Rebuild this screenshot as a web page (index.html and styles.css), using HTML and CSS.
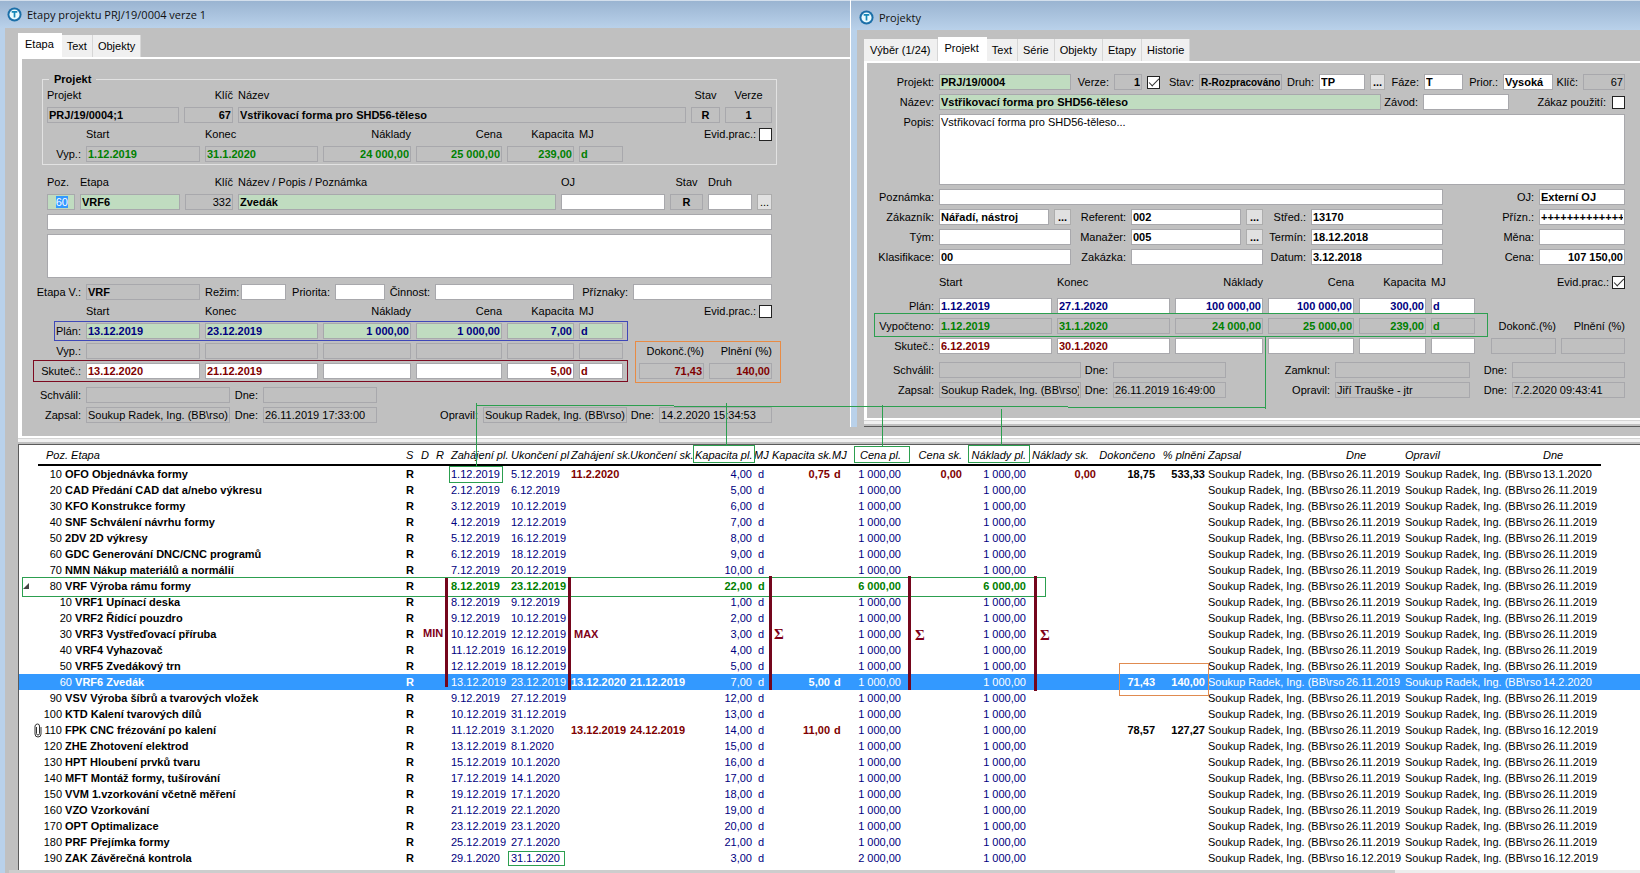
FILE: index.html
```html
<!DOCTYPE html>
<html lang="cs">
<head>
<meta charset="utf-8">
<title>Etapy projektu PRJ/19/0004 verze 1</title>
<link rel="stylesheet" href="styles.css">
</head>
<body>
<div class="app">
  <div class="windows">
    <section class="win win-stage">
      <header class="title">
        <svg class="logo" viewBox="0 0 16 16" aria-hidden="true"><circle cx="8" cy="8" r="7.5" fill="#1b6fa8"/><circle cx="8" cy="8" r="5.4" fill="#e9fbff"/><path d="M5 5.2h6M8 5.2v6" stroke="#1488b8" stroke-width="1.8" fill="none"/></svg>
        <h1>Etapy projektu PRJ/19/0004 verze 1</h1>
      </header>
      <div class="body">
        <nav class="tabs">
          <button class="tab active">Etapa</button><button class="tab">Text</button><button class="tab">Objekty</button>
        </nav>
        <div class="panel">
          <fieldset class="group">
            <legend>Projekt</legend>
            <div class="row head r-proj"><label for="a1">Projekt</label><label class="r" for="a2">Klíč</label><label for="a3">Název</label><label class="c" for="a4">Stav</label><label class="c" for="a5">Verze</label></div>
            <div class="row r-proj"><input id="a1" class="ro b" readonly value="PRJ/19/0004;1"><input id="a2" class="ro b r" readonly value="67"><input id="a3" class="ro b" readonly value="Vstřikovací forma pro SHD56-těleso"><input id="a4" class="ro b c" readonly value="R"><input id="a5" class="ro b c" readonly value="1"></div>
            <div class="row head r-sum"><span></span><label for="b1">Start</label><label for="b2">Konec</label><label class="r" for="b3">Náklady</label><label class="r" for="b4">Cena</label><label class="r" for="b5">Kapacita</label><label for="b6">MJ</label><label class="check">Evid.prac.: <input type="checkbox"></label></div>
            <div class="row r-sum"><span class="r">Vyp.:</span><input id="b1" class="ro b green" readonly value="1.12.2019"><input id="b2" class="ro b green" readonly value="31.1.2020"><input id="b3" class="ro b green r" readonly value="24 000,00"><input id="b4" class="ro b green r" readonly value="25 000,00"><input id="b5" class="ro b green r" readonly value="239,00"><input id="b6" class="ro b green" readonly value="d"></div>
          </fieldset>
          <div class="row head r-stage inset"><span>Poz.</span><label for="c2">Etapa</label><label class="r" for="c3">Klíč</label><label for="c4">Název / Popis / Poznámka</label><label for="c5">OJ</label><label class="c" for="c6">Stav</label><label for="c7">Druh</label></div>
          <div class="row r-stage inset"><div class="req posbox"><mark>60</mark></div><input id="c2" class="req b" value="VRF6"><input id="c3" class="ro r" readonly value="332"><input id="c4" class="req b" value="Zvedák"><input id="c5"><input id="c6" class="ro b c" readonly value="R"><input id="c7"><button class="dots" aria-label="Vybrat druh">...</button></div>
          <div class="row r-one inset"><input aria-label="Popis"></div>
          <div class="row r-one inset"><textarea class="note" aria-label="Poznámka"></textarea></div>
          <div class="row r-opts"><label class="r" for="d1">Etapa V.:</label><input id="d1" class="ro b" readonly value="VRF"><label for="d2">Režim:</label><input id="d2"><label class="r" for="d3">Priorita:</label><input id="d3"><label class="r" for="d4">Činnost:</label><input id="d4"><label class="r" for="d5">Příznaky:</label><input id="d5"></div>
          <div class="row head r-dates"><span></span><span>Start</span><span>Konec</span><span class="r">Náklady</span><span class="r">Cena</span><span class="r">Kapacita</span><span>MJ</span><label class="check">Evid.prac.: <input type="checkbox"></label></div>
          <div class="row r-dates"><label class="r" for="e1">Plán:</label><input id="e1" class="req b navy" value="13.12.2019"><input aria-label="Plán konec" class="req b navy" value="23.12.2019"><input aria-label="Plán náklady" class="req b navy r" value="1 000,00"><input aria-label="Plán cena" class="req b navy r" value="1 000,00"><input aria-label="Plán kapacita" class="req b navy r" value="7,00"><input aria-label="Plán MJ" class="req b navy" value="d"></div>
          <div class="row r-dates"><label class="r" for="e2">Vyp.:</label><input id="e2" class="ro" readonly><input aria-label="Vyp. konec" class="ro" readonly><input aria-label="Vyp. náklady" class="ro" readonly><input aria-label="Vyp. cena" class="ro" readonly><input aria-label="Vyp. kapacita" class="ro" readonly><input aria-label="Vyp. MJ" class="ro" readonly><label class="r" for="e4">Dokonč.(%)</label><label class="r" for="e5">Plnění (%)</label></div>
          <div class="row r-dates"><label class="r" for="e3">Skuteč.:</label><input id="e3" class="b red" value="13.12.2020"><input aria-label="Skuteč. konec" class="b red" value="21.12.2019"><input aria-label="Skuteč. náklady"><input aria-label="Skuteč. cena"><input aria-label="Skuteč. kapacita" class="b red r" value="5,00"><input aria-label="Skuteč. MJ" class="b red" value="d"><div class="pct"><input id="e4" class="ro b red r" readonly value="71,43"></div><input id="e5" class="ro b red r" readonly value="140,00"></div>
          <div class="row r-log space"><label class="r" for="f1">Schválil:</label><input id="f1" class="ro" readonly><label class="r" for="f2">Dne:</label><input id="f2" class="ro" readonly></div>
          <div class="row r-log"><label class="r" for="f3">Zapsal:</label><input id="f3" class="ro" readonly value="Soukup Radek, Ing. (BB\rso)"><label class="r" for="f4">Dne:</label><input id="f4" class="ro" readonly value="26.11.2019 17:33:00"><label class="r" for="f5">Opravil:</label><input id="f5" class="ro" readonly value="Soukup Radek, Ing. (BB\rso)"><label class="r" for="f6">Dne:</label><input id="f6" class="ro" readonly value="14.2.2020 15:34:53"></div>
        </div>
      </div>
    </section>
    <section class="win win-project">
      <header class="title">
        <svg class="logo" viewBox="0 0 16 16" aria-hidden="true"><circle cx="8" cy="8" r="7.5" fill="#1b6fa8"/><circle cx="8" cy="8" r="5.4" fill="#e9fbff"/><path d="M5 5.2h6M8 5.2v6" stroke="#1488b8" stroke-width="1.8" fill="none"/></svg>
        <h1>Projekty</h1>
      </header>
      <div class="body">
        <nav class="tabs">
          <button class="tab">Výběr (1/24)</button><button class="tab active">Projekt</button><button class="tab">Text</button><button class="tab">Série</button><button class="tab">Objekty</button><button class="tab">Etapy</button><button class="tab">Historie</button>
        </nav>
        <div class="panel">
          <div class="row p-id"><label class="r" for="g1">Projekt:</label><input id="g1" class="req b" value="PRJ/19/0004"><label class="r" for="g2">Verze:</label><input id="g2" class="ro b r" readonly value="1"><input type="checkbox" aria-label="Aktuální verze" checked><label class="r" for="g3">Stav:</label><input id="g3" class="ro b small" readonly value="R-Rozpracováno"><label class="r" for="g4">Druh:</label><input id="g4" class="b" value="TP"><button class="dots b" aria-label="Vybrat druh">...</button><label class="r" for="g5">Fáze:</label><input id="g5" class="b" value="T"><label class="r" for="g6">Prior.:</label><input id="g6" class="b" value="Vysoká"><label class="r" for="g7">Klíč:</label><input id="g7" class="ro r" readonly value="67"></div>
          <div class="row p-name"><label class="r" for="h1">Název:</label><input id="h1" class="req b" value="Vstřikovací forma pro SHD56-těleso"><label class="r" for="h2">Závod:</label><input id="h2"><label class="check wide">Zákaz použití: <input type="checkbox"></label></div>
          <div class="row p-desc"><label class="r" for="h3">Popis:</label><textarea id="h3" class="desc">Vstřikovací forma pro SHD56-těleso...</textarea></div>
          <div class="row p-note"><label class="r" for="h4">Poznámka:</label><input id="h4"><label class="r" for="h5">OJ:</label><input id="h5" class="b" value="Externí OJ"></div>
          <div class="row p-ref"><label class="r" for="i1">Zákazník:</label><input id="i1" class="b" value="Nářadí, nástroj"><button class="dots b" aria-label="Vybrat zákazníka">...</button><label class="r" for="i2">Referent:</label><input id="i2" class="b" value="002"><button class="dots b" aria-label="Vybrat referenta">...</button><label class="r" for="i3">Střed.:</label><input id="i3" class="b" value="13170"><label class="r" for="i4">Přízn.:</label><input id="i4" class="b" value="++++++++++++++"></div>
          <div class="row p-ref"><label class="r" for="i5">Tým:</label><input id="i5" class="two"><label class="r" for="i6">Manažer:</label><input id="i6" class="b" value="005"><button class="dots b" aria-label="Vybrat manažera">...</button><label class="r" for="i7">Termín:</label><input id="i7" class="b" value="18.12.2018"><label class="r" for="i8">Měna:</label><input id="i8"></div>
          <div class="row p-ref"><label class="r" for="j1">Klasifikace:</label><input id="j1" class="two b" value="00"><label class="r" for="j2">Zakázka:</label><input id="j2" class="two"><label class="r" for="j3">Datum:</label><input id="j3" class="b" value="3.12.2018"><label class="r" for="j4">Cena:</label><input id="j4" class="b r" value="107 150,00"></div>
          <div class="row head p-dates above"><span></span><span>Start</span><span>Konec</span><span class="r">Náklady</span><span class="r">Cena</span><span class="r">Kapacita</span><span>MJ</span><label class="check">Evid.prac.: <input type="checkbox" checked></label></div>
          <div class="row p-dates space"><label class="r" for="k1">Plán:</label><input id="k1" class="b navy" value="1.12.2019"><input aria-label="Plán konec" class="b navy" value="27.1.2020"><input aria-label="Plán náklady" class="b navy r" value="100 000,00"><input aria-label="Plán cena" class="b navy r" value="100 000,00"><input aria-label="Plán kapacita" class="b navy r" value="300,00"><input aria-label="Plán MJ" class="b navy" value="d"></div>
          <div class="row p-dates"><label class="r" for="k2">Vypočteno:</label><input id="k2" class="ro b green" readonly value="1.12.2019"><input aria-label="Vypočteno konec" class="ro b green" readonly value="31.1.2020"><input aria-label="Vypočteno náklady" class="ro b green r" readonly value="24 000,00"><input aria-label="Vypočteno cena" class="ro b green r" readonly value="25 000,00"><input aria-label="Vypočteno kapacita" class="ro b green r" readonly value="239,00"><input aria-label="Vypočteno MJ" class="ro b green" readonly value="d"><label class="r" for="k4">Dokonč.(%)</label><label class="r" for="k5">Plnění (%)</label></div>
          <div class="row p-dates"><label class="r" for="k3">Skuteč.:</label><input id="k3" class="b red" value="6.12.2019"><input aria-label="Skuteč. konec" class="b red" value="30.1.2020"><input aria-label="Skuteč. náklady"><input aria-label="Skuteč. cena"><input aria-label="Skuteč. kapacita"><input aria-label="Skuteč. MJ"><div class="pct"><input id="k4" class="ro" readonly></div><input id="k5" class="ro" readonly></div>
          <div class="row p-log space"><label class="r" for="l1">Schválil:</label><input id="l1" class="ro" readonly><label class="r" for="l2">Dne:</label><input id="l2" class="ro" readonly><label class="r" for="l3">Zamknul:</label><input id="l3" class="ro" readonly><label class="r" for="l4">Dne:</label><input id="l4" class="ro" readonly></div>
          <div class="row p-log"><label class="r" for="l5">Zapsal:</label><input id="l5" class="ro" readonly value="Soukup Radek, Ing. (BB\rso)"><label class="r" for="l6">Dne:</label><input id="l6" class="ro" readonly value="26.11.2019 16:49:00"><label class="r" for="l7">Opravil:</label><input id="l7" class="ro" readonly value="Jiří Trauške - jtr"><label class="r" for="l8">Dne:</label><input id="l8" class="ro" readonly value="7.2.2020 09:43:41"></div>
        </div>
        <div class="edge"></div>
      </div>
    </section>
  </div>
  <div class="list">
    <div class="edge"></div>
    <div class="sheet">
      <table>
        <colgroup><col class="w19"><col class="w367"><col class="w15"><col class="w15"><col class="w15"><col class="w60"><col class="w60"><col class="w59"><col class="w65"><col class="w59"><col class="w18"><col class="w60"><col class="w19"><col class="w52"><col class="w61"><col class="w64"><col class="w70"><col class="w59"><col class="w50"><col class="w139"><col class="w59"><col class="w138"><col class="w59"><col></colgroup>
        <thead><tr><td></td><th class="poz">Poz. Etapa</th><th>S</th><th>D</th><th>R</th><th>Zahájení pl.</th><th>Ukončení pl</th><th>Zahájení sk.</th><th>Ukončení sk.</th><th class="r">Kapacita pl.</th><th>MJ</th><th>Kapacita sk.</th><th>MJ</th><th class="r">Cena pl.</th><th class="r">Cena sk.</th><th class="r">Náklady pl.</th><th class="mid">Náklady sk.</th><th class="r">Dokončeno</th><th class="r">% plněni</th><th class="by">Zapsal</th><th>Dne</th><th>Opravil</th><th>Dne</th><td></td></tr></thead>
        <tbody id="stages"></tbody>
      </table>
    </div>
    <div class="scroll"><div class="thumb"></div></div>
  </div>
  <svg class="marks" viewBox="0 0 1640 873" fill="none" shape-rendering="crispEdges">
    <rect x="54.5" y="321.5" width="573" height="19" stroke="#3f48b8"/>
    <rect x="33.5" y="360.5" width="594" height="21" stroke="#7d0a20"/>
    <rect x="635.5" y="341.5" width="145" height="41" stroke="#e88b45"/>
    <rect x="1119.5" y="663.5" width="89" height="32" stroke="#e08b50"/>
    <g stroke="#2c9f4f">
      <rect x="874.5" y="313.5" width="613" height="23"/>
      <path d="M476.5 403V466M476 405.5H674M674 406.5H1068M1068 407.5H1265M1265.5 337V409M726.5 403V445M882.5 405V446M1001.5 409V445"/>
      <rect x="449.5" y="466.5" width="53" height="16"/>
      <rect x="693.5" y="445.5" width="61" height="17"/>
      <rect x="854.5" y="446.5" width="55" height="16"/>
      <rect x="968.5" y="445.5" width="61" height="17"/>
      <rect x="22.5" y="577.5" width="1023" height="19"/>
      <rect x="508.5" y="851.5" width="56" height="14"/>
    </g>
    <path stroke="#74061d" stroke-width="3" d="M446.500 578V687M569.500 577V690M770.500 576V690M909.500 576V690M1035.500 576V691"/>
    <g class="tags"><text x="423" y="637">MIN</text><text x="574" y="638">MAX</text><text class="sigma" x="774" y="639">Σ</text><text class="sigma" x="915" y="640">Σ</text><text class="sigma" x="1040" y="640">Σ</text></g>
  </svg>
</div>
<script src="stages.js"></script>
</body>
</html>
```
FILE: stages.js
```js
// poz, name, planned start, planned end, capacity, options
const stages = [
  [10, "OFO Objednávka formy", "1.12.2019", "5.12.2019", "4,00", { start: "11.2.2020", cap: "0,75", zero: "0,00", done: "18,75", fill: "533,33", edited: "13.1.2020" }],
  [20, "CAD Předání CAD dat a/nebo výkresu", "2.12.2019", "6.12.2019", "5,00"],
  [30, "KFO Konstrukce formy", "3.12.2019", "10.12.2019", "6,00"],
  [40, "SNF Schválení návrhu formy", "4.12.2019", "12.12.2019", "7,00"],
  [50, "2DV 2D výkresy", "5.12.2019", "16.12.2019", "8,00"],
  [60, "GDC Generování DNC/CNC programů", "6.12.2019", "18.12.2019", "9,00"],
  [70, "NMN Nákup materiálů a normálií", "7.12.2019", "20.12.2019", "10,00"],
  [80, "VRF Výroba rámu formy", "8.12.2019", "23.12.2019", "22,00", { price: "6 000,00", cls: "total", icon: "fold" }],
  [10, "VRF1 Upínací deska", "8.12.2019", "9.12.2019", "1,00", { cls: "child" }],
  [20, "VRF2 Řídící pouzdro", "9.12.2019", "10.12.2019", "2,00", { cls: "child" }],
  [30, "VRF3 Vystřeďovací příruba", "10.12.2019", "12.12.2019", "3,00", { cls: "child" }],
  [40, "VRF4 Vyhazovač", "11.12.2019", "16.12.2019", "4,00", { cls: "child" }],
  [50, "VRF5 Zvedákový trn", "12.12.2019", "18.12.2019", "5,00", { cls: "child" }],
  [60, "VRF6 Zvedák", "13.12.2019", "23.12.2019", "7,00", { cls: "child selected", start: "13.12.2020", end: "21.12.2019", cap: "5,00", done: "71,43", fill: "140,00", edited: "14.2.2020" }],
  [90, "VSV Výroba šíbrů a tvarových vložek", "9.12.2019", "27.12.2019", "12,00"],
  [100, "KTD Kalení tvarových dílů", "10.12.2019", "31.12.2019", "13,00"],
  [110, "FPK CNC frézování po kalení", "11.12.2019", "3.1.2020", "14,00", { icon: "clip", start: "13.12.2019", end: "24.12.2019", cap: "11,00", done: "78,57", fill: "127,27", edited: "16.12.2019" }],
  [120, "ZHE Zhotovení elektrod", "13.12.2019", "8.1.2020", "15,00"],
  [130, "HPT Hloubení prvků tvaru", "15.12.2019", "10.1.2020", "16,00"],
  [140, "MFT Montáž formy, tušírování", "17.12.2019", "14.1.2020", "17,00"],
  [150, "VVM 1.vzorkování včetně měření", "19.12.2019", "17.1.2020", "18,00"],
  [160, "VZO Vzorkování", "21.12.2019", "22.1.2020", "19,00"],
  [170, "OPT Optimalizace", "23.12.2019", "23.1.2020", "20,00"],
  [180, "PRF Přejímka formy", "25.12.2019", "27.1.2020", "21,00"],
  [190, "ZAK Závěrečná kontrola", "29.1.2020", "31.1.2020", "3,00", { price: "2 000,00", cost: "1 000,00", created: "16.12.2019", edited: "16.12.2019" }]
];

const icons = {
  fold: '<svg class="fold" viewBox="0 0 6 6"><path d="M6 0V6H0Z" fill="#444"/></svg>',
  clip: '<svg class="clip" viewBox="0 0 8 15"><path d="M2.500 4V10.500Q2.500 12 4 12T5.500 10.500V3Q5.500 1 3.500 1T1 3V11Q1 14 4 14T7 11V4" fill="none" stroke="#333" stroke-width="1"/></svg>'
};
const cell = (text, cls) => `<td class="${cls || ""}">${text || ""}</td>`;
const author = "Soukup Radek, Ing. (BB\\rso";

document.getElementById("stages").innerHTML = stages.map(([poz, name, from, to, cap, o = {}]) => {
  const price = o.price || "1 000,00";
  return `<tr class="${o.cls || ""}">` +
    cell(icons[o.icon], "icon") +
    cell(`<span class="num">${poz}</span> <b>${name}</b>`) +
    cell("R", "b") + cell() + cell() +
    cell(from, "plan") + cell(to, "plan") +
    cell(o.start, "fact") + cell(o.end, "fact") +
    cell(cap, "plan r") + cell("d", "plan unit") +
    cell(o.cap, "fact r") + cell(o.cap && "d", "fact unit-fact") +
    cell(price, "plan r") + cell(o.zero, "fact r") +
    cell(o.cost || price, "plan r") + cell(o.zero, "fact r") +
    cell(o.done, "b r") + cell(o.fill, "b r") +
    cell(author, "by") + cell(o.created || "26.11.2019") +
    cell(author) + cell(o.edited || "26.11.2019") + cell() + "</tr>";
}).join("");
```
FILE: styles.css
```css
* { box-sizing: border-box; }
body, input, textarea, button { font-family: "Liberation Sans", Arial, sans-serif; font-size: 11px; color: #000; }
body { margin: 0; background: #c0c0c0; line-height: 14px; }
.app { position: relative; min-height: 100vh; display: flex; flex-direction: column; }

/* windows */
.windows { display: grid; grid-template-columns: 851fr 789fr; align-items: start; }
.win { min-width: 0; border-left: 5px solid #b9d1ea; background: #c0c0c0; }
.win-project { border-left-width: 6px; box-shadow: -1px 0 #fff; }
.title { display: flex; align-items: center; gap: 5px; height: 28px; margin-left: -5px; padding-left: 7px; border-top: 1px solid #d3dfec; background: linear-gradient(#9ab4d1, #b9d1ea); }
.win-project .title { height: 30px; margin-left: -6px; padding: 4px 0 0 8px; }
.title h1 { margin: 0; font: 11px "Open Sans", "Noto Sans", sans-serif; color: #111; }
.logo { width: 15px; height: 15px; }
.body { padding: 5px 0 0 13px; }
.win-project .body { padding: 7px 0 0 7px; }
.tabs { display: flex; align-items: flex-end; height: 24px; }
.tab { height: 22px; padding: 0 5px; border: 0; border-right: 1px solid #d6d6d6; background: #f0f0f0; }
.win-project .tab:first-child { padding: 0 6px; }
.tab.active { height: 24px; padding: 0 7px 2px; background: #fff; border-color: #fff; }
.panel { display: flex; flex-direction: column; gap: 4px; border: solid #fff; border-width: 2px 0 0 4px; padding: 14px 74px 13px 14px; }
.win-project .panel { border-left-width: 3px; padding: 11px 15px 20px 8px; }
.edge { height: 9px; border-top: 2px solid #fff; border-bottom: 1px solid #5a5a5a; background: linear-gradient(#d5d5d5 1px, #f0f0f0 1px 4px, #c0c0c0 4px); }

/* form rows */
.group { margin: 0 0 6px 6px; padding: 3px 4px 2px; border: 1px solid #e2e2e2; min-width: 0; }
.group legend { margin-left: 2px; padding: 0 5px; font-weight: bold; line-height: 12px; }
.group .row + .row { margin-top: 4px; }
.row { display: grid; column-gap: 5px; align-items: center; line-height: 16px; white-space: nowrap; }
.row > * { min-width: 0; }
.head { line-height: 15px; height: 15px; }
.inset { padding: 0 5px 0 11px; }
.win-stage .row:not(.inset) { padding-right: 5px; }
.win-stage .group .row { padding-right: 0; }
.space { margin-top: 4px; }
.above { margin-top: 6px; }
.r-proj { grid-template-columns: 132fr 49fr 448fr 29fr 47fr; }
.r-sum { grid-template-columns: 34fr 114fr 113fr 88fr 86fr 67fr 44fr 76fr 63fr; }
.r-stage { grid-template-columns: 28fr 100fr 48fr 318fr 104fr 33fr 44fr 15fr; }
.r-one { grid-template-columns: 1fr; }
.r-opts { grid-template-columns: 45fr 114fr 31fr 45fr 39fr 50fr 40fr 139fr 49fr 139fr; }
.r-dates { grid-template-columns: 45fr 114fr 113fr 88fr 86fr 67fr 44fr 76fr 63fr; }
.r-log { grid-template-columns: 45fr 144fr 23fr 114fr 96fr 144fr 22fr 113fr; }
.p-id { grid-template-columns: 59fr 132fr 33fr 28fr 16fr 26fr 83fr 27fr 46fr 15fr 29fr 39fr 30fr 50fr 20fr 42fr; }
.p-name { grid-template-columns: 59fr 442fr 32fr 86fr 111fr; }
.p-desc { grid-template-columns: 59fr 686fr; }
.p-desc label { align-self: start; }
.p-note { grid-template-columns: 59fr 504fr 86fr 86fr; }
.p-ref { grid-template-columns: 59fr 110fr 17fr 50fr 110fr 17fr 38fr 132fr 86fr 86fr; }
.p-dates { grid-template-columns: 59fr 113fr 113fr 88fr 86fr 67fr 44fr 76fr 64fr; }
.p-log { grid-template-columns: 59fr 142fr 22fr 113fr 99fr 135fr 32fr 113fr; }
.two { grid-column: span 2; }
.pct { padding-left: 11px; display: flex; }
.check { grid-column: span 2; display: flex; align-items: center; justify-content: flex-end; gap: 3px; }
.check.wide { grid-column: auto; gap: 6px; }

/* fields */
input, textarea, .posbox { width: 100%; height: 16px; margin: 0; padding: 0 1px; border: 1px solid #a8a8ac; border-radius: 0; background: #fff; line-height: 14px; outline: 0; }
textarea { display: block; resize: none; overflow: hidden; }
.note { height: 44px; margin-bottom: 2px; }
.desc { height: 71px; }
.small { font-size: 10px; }
.ro { background: #c0c0c0; }
.req { background: #c0dcc0; }
.posbox { text-align: right; padding-right: 6px; }
.posbox mark { background: #3399ff; color: #fff; }
.b { font-weight: bold; }
.r { text-align: right; }
.row > label.r, .row > span.r { display: flex; justify-content: flex-end; }
.c { text-align: center; }
.green { color: #008000; }
.navy { color: #000080; }
.red { color: #800000; }
input[type="checkbox"] { appearance: none; flex: none; width: 13px; height: 13px; border: 1px solid #222; display: grid; place-items: center; }
input[type="checkbox"]:checked::after { content: ""; width: 9px; height: 4px; border: solid #333; border-width: 0 0 1px 1px; transform: rotate(-45deg) translate(1px, -1px); }
.dots { width: 100%; height: 16px; padding: 0; border: 1px solid #adadad; background: #e1e1e1; line-height: 14px; }

/* stage list */
.list { flex: 1; display: flex; flex-direction: column; border-left: 5px solid #b9d1ea; padding-left: 13px; }
.sheet { flex: 1; border-left: 1px solid #5a5a5a; background: #fff; }
.scroll { height: 3px; margin-left: -9px; background: #ededed; }
.thumb { width: 85%; height: 3px; background: #cdcdcd; }
table { width: 100%; table-layout: fixed; border-collapse: collapse; }
th, td { height: 16px; padding: 0 1px; line-height: 16px; text-align: left; white-space: nowrap; }
th { height: 20px; font-weight: normal; font-style: italic; border-bottom: 2px solid #000; line-height: 18px; }
th.poz { padding-left: 8px; }
th.mid { padding-left: 5px; }
th.r, td.r { text-align: right; }
.by { padding-left: 2px; }
.num { display: inline-block; width: 23px; text-align: right; }
.child .num { width: 33px; }
.plan { color: #000080; }
.unit { padding-left: 5px; }
.unit-fact { padding-left: 3px; }
.fact { color: #800000; font-weight: bold; }
.total .plan { color: #008000; font-weight: bold; }
.selected td { background: #3399ff; color: #fff; }
.icon { padding: 0 0 0 4px; }
.icon svg { display: block; }
.fold { width: 6px; height: 6px; }
.icon .clip { width: 8px; height: 15px; margin-left: 11px; }
.w15 { width: 15px; } .w18 { width: 18px; } .w19 { width: 19px; } .w50 { width: 50px; }
.w52 { width: 52px; } .w59 { width: 59px; } .w60 { width: 60px; } .w61 { width: 61px; }
.w64 { width: 64px; } .w65 { width: 65px; } .w70 { width: 70px; }
.w138 { width: 138px; } .w139 { width: 139px; } .w367 { width: 367px; }

/* annotation layer */
.marks { position: absolute; top: 0; left: 0; width: 100%; pointer-events: none; }
.tags { fill: #800018; font-weight: bold; font-size: 11px; }
.sigma { font-family: "Liberation Serif", serif; font-size: 15px; }
```
